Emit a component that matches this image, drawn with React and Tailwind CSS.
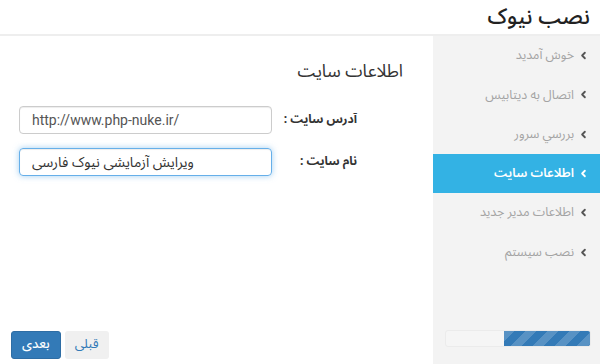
import { ChevronLeft } from "lucide-react";

const steps = [
  { title: "خوش آمدید" },
  { title: "اتصال به دیتابیس" },
  { title: "بررسي سرور" },
  { title: "اطلاعات سایت", active: true },
  { title: "اطلاعات مدیر جدید" },
  { title: "نصب سیستم" },
];

const fa = "font-['Noto_Sans_Arabic','DejaVu_Sans',sans-serif]";

const App = () => {
  return (
    <div dir="rtl" className={`w-[600px] h-[364px] bg-white flex flex-col ${fa}`}>
      <div className="h-[36px] flex items-center px-[10px] border-b-2 border-[#eeeeee]">
        <h1 className="text-[22px] font-medium text-[#222] leading-[30px]">نصب نیوک</h1>
      </div>

      <div className="flex-1 flex">
        {/* sidebar */}
        <div className="w-[167px] bg-[#f3f3f3] flex flex-col">
          <ul>
            {steps.map((s) => (
              <li
                key={s.title}
                className={`h-[39.3px] flex items-center gap-[4px] pr-[11px] text-[12.5px] ${
                  s.active ? "bg-[#33b2e4] text-white font-semibold" : "text-[#a3a3a3]"
                }`}
              >
                <ChevronLeft
                  size={11}
                  strokeWidth={4}
                  className={s.active ? "text-white" : "text-[#555]"}
                />
                <span>{s.title}</span>
              </li>
            ))}
          </ul>
          <div className="mt-auto mb-[17px] mr-[9px] ml-[12px] h-[17px] rounded-[3px] bg-[#f5f5f5] border border-[#ebebeb] overflow-hidden flex">
            <div className="w-[60%] h-full bg-[#337ab7] bg-[linear-gradient(135deg,rgba(255,255,255,.18)_25%,transparent_25%,transparent_50%,rgba(255,255,255,.18)_50%,rgba(255,255,255,.18)_75%,transparent_75%,transparent)] bg-[length:22px_22px]" />
          </div>
        </div>

        {/* main */}
        <div className="flex-1 flex flex-col">
          <h2 className="pr-[30px] mt-[22px] text-[17.5px] text-[#333] leading-[28px]">اطلاعات سایت</h2>

          <div className="mt-[20px] flex flex-col gap-[14px] pr-[76px] pl-[19px]">
            <div className="flex items-center gap-[8px]">
              <label className="w-[77px] text-[12px] font-bold text-[#333]">آدرس سایت :</label>
              <input
                dir="ltr"
                readOnly
                value="http://www.php-nuke.ir/"
                className="w-[253px] h-[28px] px-[12px] rounded-[4px] border border-[#cccccc] text-[14px] text-[#555] font-['Roboto',sans-serif] outline-none shadow-[inset_0_1px_1px_rgba(0,0,0,.075)]"
              />
            </div>
            <div className="flex items-center gap-[8px]">
              <label className="w-[77px] text-[12px] font-bold text-[#333]">نام سایت :</label>
              <input
                dir="ltr"
                readOnly
                value="ویرایش آزمایشی نیوک فارسی"
                className={`w-[253px] h-[28px] px-[12px] rounded-[4px] border border-[#66afe9] text-[14px] text-[#333] text-left outline-none shadow-[inset_0_1px_1px_rgba(0,0,0,.075),0_0_6px_rgba(102,175,233,.6)] ${fa}`}
              />
            </div>
          </div>

          <div className="mt-auto mb-[5px] pl-[11px] flex justify-end gap-[4px]">
            <button className="h-[28px] px-[10px] rounded-[3px] bg-[#f0f0f0] text-[#337ab7] text-[13px]">
              قبلی
            </button>
            <button className="h-[28px] px-[10px] rounded-[3px] bg-[#337ab7] border border-[#2e6da4] text-white text-[13px] font-medium">
              بعدی
            </button>
          </div>
        </div>
      </div>
    </div>
  );
};

export default App;
